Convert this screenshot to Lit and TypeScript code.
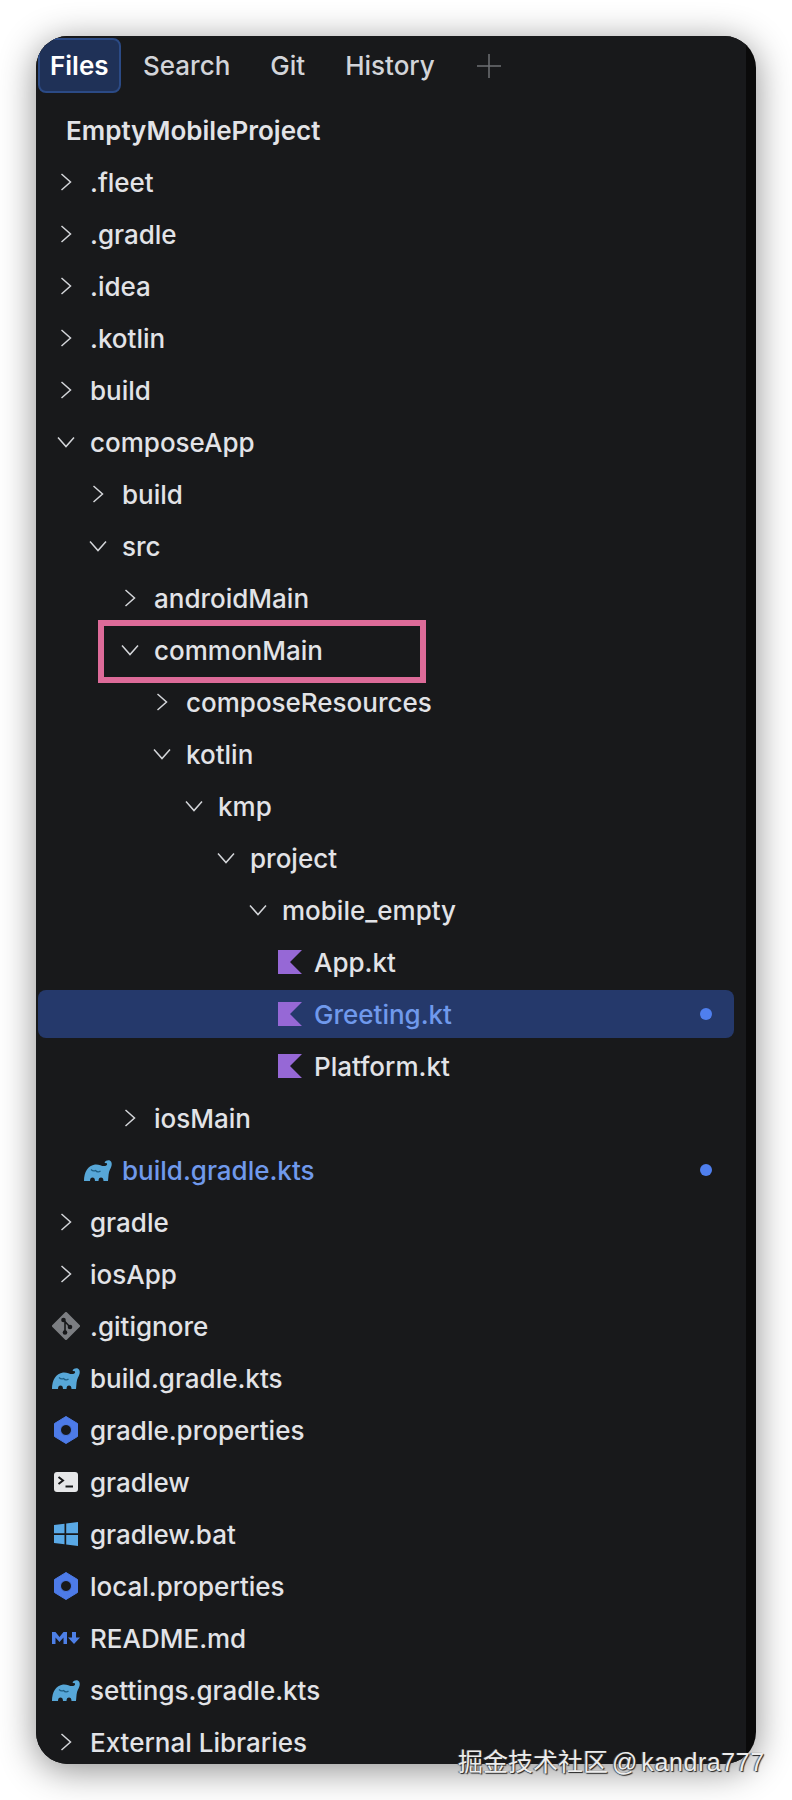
import { LitElement, html, css, svg } from "lit";
import { customElement } from "lit/decorators.js";

type Kind = "closed" | "open" | "kotlin" | "elephant" | "git" | "hex" | "term" | "win" | "md";
interface Row {
  name: string;
  level: number;
  kind: Kind;
  bold?: boolean;
  blue?: boolean;
  selected?: boolean;
  dot?: boolean;
  marked?: boolean;
}

const rows: Row[] = [
  { name: "EmptyMobileProject", level: 0, kind: "open", bold: true },
  { name: ".fleet", level: 0, kind: "closed" },
  { name: ".gradle", level: 0, kind: "closed" },
  { name: ".idea", level: 0, kind: "closed" },
  { name: ".kotlin", level: 0, kind: "closed" },
  { name: "build", level: 0, kind: "closed" },
  { name: "composeApp", level: 0, kind: "open" },
  { name: "build", level: 1, kind: "closed" },
  { name: "src", level: 1, kind: "open" },
  { name: "androidMain", level: 2, kind: "closed" },
  { name: "commonMain", level: 2, kind: "open", marked: true },
  { name: "composeResources", level: 3, kind: "closed" },
  { name: "kotlin", level: 3, kind: "open" },
  { name: "kmp", level: 4, kind: "open" },
  { name: "project", level: 5, kind: "open" },
  { name: "mobile_empty", level: 6, kind: "open" },
  { name: "App.kt", level: 7, kind: "kotlin" },
  { name: "Greeting.kt", level: 7, kind: "kotlin", blue: true, selected: true, dot: true },
  { name: "Platform.kt", level: 7, kind: "kotlin" },
  { name: "iosMain", level: 2, kind: "closed" },
  { name: "build.gradle.kts", level: 1, kind: "elephant", blue: true, dot: true },
  { name: "gradle", level: 0, kind: "closed" },
  { name: "iosApp", level: 0, kind: "closed" },
  { name: ".gitignore", level: 0, kind: "git" },
  { name: "build.gradle.kts", level: 0, kind: "elephant" },
  { name: "gradle.properties", level: 0, kind: "hex" },
  { name: "gradlew", level: 0, kind: "term" },
  { name: "gradlew.bat", level: 0, kind: "win" },
  { name: "local.properties", level: 0, kind: "hex" },
  { name: "README.md", level: 0, kind: "md" },
  { name: "settings.gradle.kts", level: 0, kind: "elephant" },
  { name: "External Libraries", level: 0, kind: "closed" },
];

// width, height and drawing of each icon; the viewBox is the size in pixels
const icons: Record<Kind, { w: number; h: number; body: unknown }> = {
  closed: {
    w: 12,
    h: 18,
    body: svg`<path d="M1.5 1 10.5 9 1.5 17" fill="none" stroke="#d4d6da" stroke-width="1.5"/>`,
  },
  open: {
    w: 18,
    h: 12,
    body: svg`<path d="M1 1.5 9 10.5 17 1.5" fill="none" stroke="#d4d6da" stroke-width="1.5"/>`,
  },
  kotlin: { w: 24, h: 24, body: svg`<path d="M0 0H24L12 12 24 24H0Z" fill="#9668d6"/>` },
  elephant: {
    w: 28,
    h: 21,
    body: svg`<path d="M0 21C0 12 4 5.5 11 4.500 15 4 18 6.500 21 6 23 5.700 23.500 4.500 22.800 3.500 22.300 3 21.800 3 21.300 3.300L20.500 2.300C22 0 25.500-.5 27 1.500 28.500 3.500 27.500 7 26 9.500 24.500 12 24.500 16 24 21H19.500C19.500 18.500 18.500 17.500 17 17.500 15.500 17.500 14.500 18.500 14.500 21H11C11 18.500 10 17.500 8.500 17.500 7 17.500 6 18.500 6 21Z" fill="#57a7d8"/><path d="M7 9.500C8.500 11 10 11.300 11.500 10.500 13 12.300 15 12.300 16.500 11" fill="none" stroke="#1f5f85" stroke-width="1.200"/>`,
  },
  git: {
    w: 28,
    h: 28,
    body: svg`<path d="M14 1.500 26.500 14 14 26.500 1.500 14Z" fill="#7c7e82" stroke="#7c7e82" stroke-linejoin="round" stroke-width="3"/><path d="M11 7.500 18 15M13 9V20.500" fill="none" stroke="#17181a" stroke-width="1.600"/><circle cx="11.500" cy="8" r="2.300" fill="#17181a"/><circle cx="18" cy="15" r="2.300" fill="#17181a"/><circle cx="13" cy="20.500" r="2.300" fill="#17181a"/>`,
  },
  hex: {
    w: 24,
    h: 28,
    body: svg`<path fill-rule="evenodd" d="M12 .5 23.500 7.500V20.500L12 27.500 .5 20.500V7.500ZM12 8.500A5.500 5.500 0 1 0 12 19.500 5.500 5.500 0 1 0 12 8.500Z" fill="#4d7be8" stroke="#4d7be8" stroke-linejoin="round"/>`,
  },
  term: {
    w: 24,
    h: 20,
    body: svg`<rect width="24" height="20" rx="3" fill="#e6e7e9"/><path d="M4.500 5 9 8.500 4.500 12" fill="none" stroke="#17181a" stroke-width="2"/><path d="M11.500 14.500H19" stroke="#17181a" stroke-width="2"/>`,
  },
  win: {
    w: 24,
    h: 24,
    body: svg`<path d="M0 3 10.500 1.700V11.300H0ZM12.200 1.500 24 0V11.300H12.200ZM0 13H10.500V22.300L0 21ZM12.200 13H24V24L12.200 22.500Z" fill="#5aa9e6"/>`,
  },
  md: {
    w: 28,
    h: 12,
    body: svg`<path d="M0 12V0H3.500L7.500 5 11.500 0H15V12H11.500V5.500L7.500 10 3.500 5.500V12Z" fill="#4d7fe6"/><path d="M20 0H24V5.500H28L22 12 16 5.500H20Z" fill="#4d7fe6"/>`,
  },
};

@customElement("app-root")
export class AppRoot extends LitElement {
  static styles = css`
    :host {
      display: block;
      height: 1800px;
      background: #fff;
      padding: 36px;
      box-sizing: border-box;
      position: relative;
      font-family: Inter, "Noto Sans", sans-serif;
    }
    .window {
      position: relative;
      width: 720px;
      height: 1728px;
      box-sizing: border-box;
      background: #0a0a0a;
      border-radius: 32px;
      box-shadow: 0 6px 36px rgba(0, 0, 0, 0.45);
      overflow: hidden;
    }
    .panel {
      width: 710px;
      height: 100%;
      background: #18191b;
      padding: 2px;
      box-sizing: border-box;
      color: #e2e3e7;
      font-size: 26px;
      font-weight: 500;
    }
    .tabs {
      display: flex;
      align-items: center;
      height: 55px;
      color: #d2d4d9;
    }
    .tab {
      height: 100%;
      box-sizing: border-box;
      display: flex;
      align-items: center;
      padding: 0 20px;
    }
    .tab.active {
      width: 83px;
      padding: 0 10px;
      margin-right: 2px;
      color: #fff;
      font-weight: 600;
      background: #1f3157;
      border: 2px solid #2b4a85;
      border-radius: 8px;
    }
    .plus {
      width: 24px;
      height: 24px;
      margin-left: 22px;
    }
    .tree {
      margin-top: 11px;
    }
    .row {
      position: relative;
      height: 52px;
      padding-left: 4px;
      display: flex;
      align-items: center;
      white-space: nowrap;
    }
    .row.bold {
      font-weight: 600;
    }
    .row.blue {
      color: #7099ec;
    }
    .row.selected::before {
      content: "";
      position: absolute;
      left: 0;
      right: 10px;
      top: 2px;
      bottom: 2px;
      background: #25396b;
      border-radius: 8px;
    }
    .row.marked::after {
      content: "";
      position: absolute;
      left: 60px;
      top: -4px;
      width: 328px;
      height: 63px;
      box-sizing: border-box;
      border: 6px solid #dd6b99;
    }
    .gutter {
      position: relative;
      width: 48px;
      flex: none;
      display: flex;
      justify-content: center;
    }
    .gutter svg {
      display: block;
    }
    .label {
      position: relative;
    }
    .label.root {
      margin-left: 24px;
    }
    .dot {
      position: absolute;
      right: 32px;
      top: 20px;
      width: 12px;
      height: 12px;
      border-radius: 50%;
      background: #4f7fee;
    }
    .mark {
      position: absolute;
      left: 458px;
      top: 1742px;
      font-size: 25px;
      white-space: nowrap;
      color: #ececec;
      font-family: "Liberation Sans", "Noto Sans CJK SC", sans-serif;
      text-shadow: 1px 1px 1px #222, -1px 0 1px #555;
      word-spacing: -3px;
    }
    .mark span {
      letter-spacing: 0.6px;
    }
  `;

  private renderRow(r: Row) {
    const cls = `row${r.bold ? " bold" : ""}${r.blue ? " blue" : ""}${r.selected ? " selected" : ""}${r.marked ? " marked" : ""}`;
    const icon = icons[r.kind];
    return html`
      <div class=${cls}>
        ${r.bold
          ? html`<span class="label root">${r.name}</span>`
          : html`
              <div class="gutter" style="margin-left:${r.level * 32}px">
                <svg width=${icon.w} height=${icon.h} viewBox="0 0 ${icon.w} ${icon.h}">${icon.body}</svg>
              </div>
              <span class="label">${r.name}</span>
            `}
        ${r.dot ? html`<span class="dot"></span>` : ""}
      </div>
    `;
  }

  render() {
    return html`
      <div class="window">
        <div class="panel">
          <div class="tabs">
            <div class="tab active">Files</div>
            <div class="tab">Search</div>
            <div class="tab">Git</div>
            <div class="tab">History</div>
            <svg class="plus" viewBox="0 0 24 24"><path d="M12 0V24M0 12H24" stroke="#6e7074" stroke-width="1.5"/></svg>
          </div>
          <div class="tree">${rows.map((r) => this.renderRow(r))}</div>
        </div>
      </div>
      <div class="mark">掘金技术社区 @ <span>kandra777</span></div>
    `;
  }
}
